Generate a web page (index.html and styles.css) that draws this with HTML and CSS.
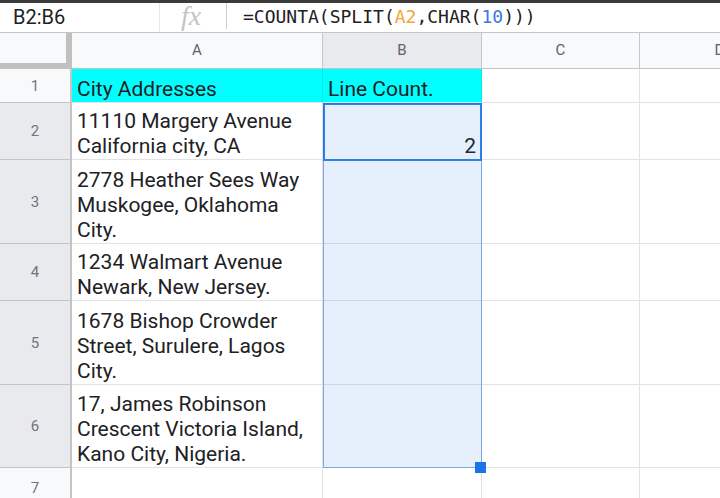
FILE: index.html
```html
<!DOCTYPE html>
<html>
<head>
<meta charset="utf-8">
<link rel="stylesheet" href="styles.css">
</head>
<body>
<div class="topbar"></div>
<div class="fbar">
  <div class="namebox">B2:B6</div>
  <div class="fx">fx</div>
  <div class="formula">=COUNTA(SPLIT(<span class="ref">A2</span>,CHAR(<span class="num">10</span>)))</div>
</div>
<div class="sheet">
  <div class="corner"></div>
  <div class="ch">A</div>
  <div class="ch sel">B</div>
  <div class="ch">C</div>
  <div class="ch">D</div>

  <div class="rh">1</div>
  <div class="c cyan">City Addresses</div>
  <div class="c cyan">Line Count.</div>
  <div class="c"></div>
  <div class="c"></div>

  <div class="rh sel">2</div>
  <div class="c">11110 Margery Avenue<br>California city, CA</div>
  <div class="c num-cell">2</div>
  <div class="c"></div>
  <div class="c"></div>

  <div class="rh sel">3</div>
  <div class="c">2778 Heather Sees Way<br>Muskogee, Oklahoma<br>City.</div>
  <div class="c"></div>
  <div class="c"></div>
  <div class="c"></div>

  <div class="rh sel">4</div>
  <div class="c">1234 Walmart Avenue<br>Newark, New Jersey.</div>
  <div class="c"></div>
  <div class="c"></div>
  <div class="c"></div>

  <div class="rh sel">5</div>
  <div class="c">1678 Bishop Crowder<br>Street, Surulere, Lagos<br>City.</div>
  <div class="c"></div>
  <div class="c"></div>
  <div class="c"></div>

  <div class="rh sel">6</div>
  <div class="c">17, James Robinson<br>Crescent Victoria Island,<br>Kano City, Nigeria.</div>
  <div class="c"></div>
  <div class="c"></div>
  <div class="c"></div>

  <div class="rh">7</div>
  <div class="c"></div>
  <div class="c"></div>
  <div class="c"></div>
  <div class="c"></div>

  <div class="range"></div>
  <div class="active"></div>
  <div class="handle"></div>
</div>
</body>
</html>
```

FILE: styles.css
```css
* { box-sizing: border-box; }
html, body {
  margin: 0;
  padding: 0;
  width: 720px;
  height: 498px;
  overflow: hidden;
  background: #fff;
  font-family: Roboto, "Liberation Sans", sans-serif;
}
.topbar {
  height: 3px;
  background: #3c3c3c;
}
.fbar {
  height: 30px;
  display: flex;
  align-items: center;
  border-bottom: 1px solid #c6c6c6;
}
.namebox {
  width: 160px;
  flex: none;
  padding-left: 13px;
  font-size: 20px;
  color: #202124;
  align-self: stretch;
  display: flex;
  align-items: center;
  padding-bottom: 2px;
  border-right: 1px solid #e6e6e6;
}
.fx {
  width: 67px;
  flex: none;
  height: 26px;
  margin-bottom: 3px;
  text-align: center;
  font-family: "Liberation Serif", serif;
  font-style: italic;
  font-size: 28px;
  line-height: 26px;
  color: #c4c4c4;
  border-right: 1px solid #cfcfcf;
  padding-right: 4px;
}
.formula {
  padding-left: 16px;
  font-family: "DejaVu Sans Mono", monospace;
  font-size: 18px;
  color: #202124;
  padding-bottom: 2px;
  white-space: nowrap;
}
.ref { color: #f3a53a; }
.num { color: #3c78d8; }

.sheet {
  position: relative;
  width: 800px;
  display: grid;
  grid-template-columns: 72px 251px 159px 158px 160px;
  grid-template-rows: 36px 34px 57px 84px 57px 84px 83px 40px;
}
.corner {
  background: #f8f9fa;
  border-right: 6px solid #c0c0c0;
  border-bottom: 6px solid #c0c0c0;
}
.ch {
  background: #f8f9fa;
  border-right: 1px solid #c8c8c8;
  border-bottom: 1px solid #c4c4c4;
  display: flex;
  align-items: center;
  justify-content: center;
  font-size: 15px;
  color: #5f6368;
  padding-bottom: 1px;
}
.ch.sel { background: #e8eaed; }
.rh {
  background: #f8f9fa;
  border-right: 2px solid #c4c4c4;
  border-bottom: 1px solid #c4c4c4;
  display: flex;
  align-items: center;
  justify-content: center;
  font-size: 15px;
  color: #70757a;
}
.rh.sel { background: #e8eaed; }
.c {
  border-right: 1px solid #e2e2e2;
  border-bottom: 1px solid #e2e2e2;
  display: flex;
  align-items: flex-end;
  padding: 0 4px 0 5px;
  font-size: 21px;
  line-height: 25px;
  color: #202124;
  white-space: nowrap;
  overflow: hidden;
}
.c.cyan {
  background: #00ffff;
  border-right-color: #00eaea;
}
.c.num-cell { justify-content: flex-end; padding-right: 5px; }

.range {
  position: absolute;
  left: 323px;
  top: 70px;
  width: 159px;
  height: 365px;
  border: 1px solid #7ea6e6;
  background: rgba(26, 115, 232, 0.11);
  pointer-events: none;
}
.active {
  position: absolute;
  left: 323px;
  top: 70px;
  width: 159px;
  height: 58px;
  border: 2px solid #1a73e8;
  opacity: 0.9;
}
.handle {
  position: absolute;
  left: 475px;
  top: 429px;
  width: 11px;
  height: 11px;
  background: #1a73e8;
}
```
